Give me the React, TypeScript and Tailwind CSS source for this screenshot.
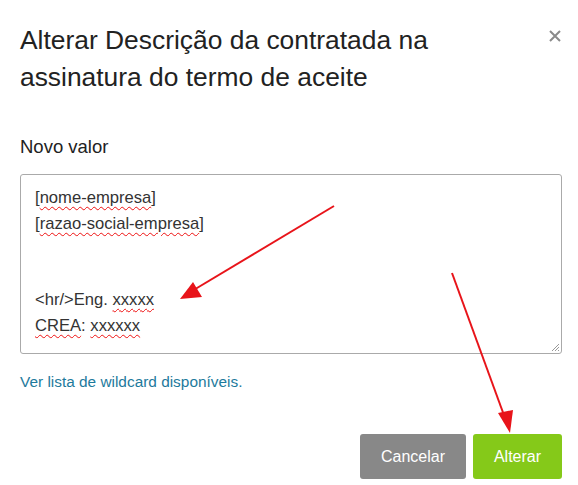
const sq = "underline decoration-wavy decoration-[#e11] decoration-1 underline-offset-[3px]"

function Arrows() {
  return (
    <svg className="absolute inset-0 pointer-events-none" width="578" height="485" viewBox="0 0 578 485">
      <line x1="334" y1="206" x2="192" y2="291" stroke="#e8141a" strokeWidth="2" />
      <polygon points="180,299 193,282 202,297" fill="#e8141a" />
      <line x1="452" y1="273" x2="505" y2="418" stroke="#e8141a" strokeWidth="2" />
      <polygon points="510,433 498,413 513,410" fill="#e8141a" />
    </svg>
  )
}

export default function App() {
  return (
    <div className="relative w-[578px] h-[485px] bg-white font-['Liberation_Sans',Arial,sans-serif] text-[#333]">
      <div className="flex items-start justify-between pl-5 pr-4 pt-[22px]">
        <h1 className="text-[26.4px] leading-[37px] text-[#222] font-normal w-[480px]">
          Alterar Descrição da contratada na assinatura do termo de aceite
        </h1>
        <button className="mt-[7px]">
          <svg width="14" height="14" viewBox="0 0 14 14">
            <path d="M2 2L12 12M12 2L2 12" stroke="#8a8a8a" strokeWidth="2" />
          </svg>
        </button>
      </div>

      <div className="pl-5 pr-4 pt-[38px]">
        <label className="block text-[18.5px] leading-[26px] text-[#222]">Novo valor</label>
        <div className="relative mt-[14px] h-[180px] rounded-[3px] border border-[#aaa] pl-[14px] pt-[10px] text-[16.6px] leading-[25.5px] text-[#333]">
          <div>[<span className={sq}>nome-empresa</span>]</div>
          <div>[<span className={sq}>razao-social-empresa</span>]</div>
          <div>&nbsp;</div>
          <div>&nbsp;</div>
          <div>&lt;hr/&gt;Eng. <span className={sq}>xxxxx</span></div>
          <div><span className={sq}>CREA</span>: <span className={sq}>xxxxxx</span></div>
          <svg className="absolute right-[1px] bottom-[1px]" width="10" height="10" viewBox="0 0 10 10">
            <path d="M9 2L2 9M9 5L5 9M9 8L8 9" stroke="#999" strokeWidth="1" />
          </svg>
        </div>
        <a className="mt-[18px] block text-[15.4px] leading-5 text-[#1d7a9c]">
          Ver lista de wildcard disponíveis.
        </a>
      </div>

      <div className="flex justify-end gap-[7px] pr-4 pt-[42px]">
        <button className="h-[45px] w-[106px] rounded-[3px] bg-[#888] text-[16px] text-white">Cancelar</button>
        <button className="h-[45px] w-[89px] rounded-[3px] bg-[#85c919] text-[16px] text-white">Alterar</button>
      </div>

      <Arrows />
    </div>
  )
}
